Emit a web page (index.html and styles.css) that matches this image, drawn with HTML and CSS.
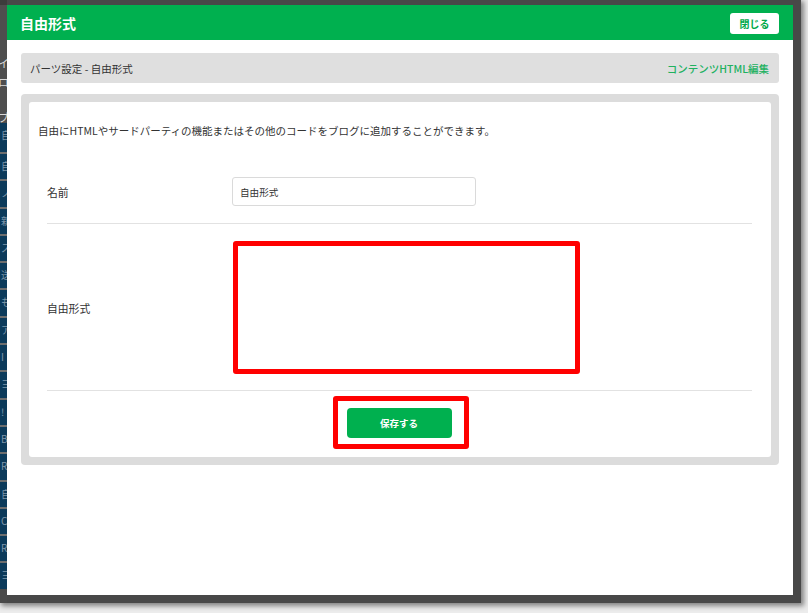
FILE: index.html
```html
<!DOCTYPE html>
<html lang="ja">
<head>
<meta charset="utf-8">
<title>自由形式</title>
<link rel="stylesheet" href="styles.css">
</head>
<body>
<div class="screen">
  <div class="under">
    <div class="under-top">
      <span class="u1">イ</span>
      <span class="u2">ロ</span>
      <span class="u3">プ</span>
    </div>
    <ul class="under-nav">
      <li>自</li><li>自</li><li>ノ</li><li>新</li><li>ス</li><li>送</li><li>も</li><li>ア</li>
      <li>I</li><li>ヨ</li><li>!</li><li>B</li><li>R</li><li>自</li><li>C</li><li>R</li><li>ヨ</li>
    </ul>
    <div class="under-bottom"></div>
  </div>
  <div class="modal">
    <header class="modal-head">
      <h1 class="modal-title">自由形式</h1>
      <button class="close-btn" type="button">閉じる</button>
    </header>
    <div class="modal-body">
      <div class="crumb">
        <span class="crumb-text">パーツ設定 - 自由形式</span>
        <a class="crumb-link" href="#">コンテンツHTML編集</a>
      </div>
      <div class="panel">
        <div class="card">
          <p class="desc">自由にHTMLやサードパーティの機能またはその他のコードをブログに追加することができます。</p>
          <div class="rows">
            <div class="row row-name">
              <div class="label">名前</div>
              <div class="field"><input class="text-input" type="text" value="自由形式"></div>
            </div>
            <div class="row row-code">
              <div class="label">自由形式</div>
              <div class="field"><div class="code-box"></div></div>
            </div>
            <div class="actions">
              <div class="mark">
                <button class="save-btn" type="button">保存する</button>
              </div>
            </div>
          </div>
        </div>
      </div>
    </div>
  </div>
  <div class="right-gap"></div>
</div>
</body>
</html>
```

FILE: styles.css
```css
* { box-sizing: border-box; }

html, body {
  margin: 0;
  padding: 0;
}

body {
  width: 808px;
  height: 613px;
  overflow: hidden;
  background: #ececec;
  font-family: "Noto Sans CJK JP", "Noto Sans", "Liberation Sans", sans-serif;
  color: #333;
}

.screen {
  width: 801px;
  height: 603px;
  background: #484848;
  display: flex;
  align-items: flex-start;
  box-shadow: 2px 2px 5px 1px rgba(0, 0, 0, 0.45);
}

/* underlying page, visible on the left */
.under {
  width: 7px;
  height: 603px;
  overflow: hidden;
  display: flex;
  flex-direction: column;
  flex: none;
}

.under-top {
  height: 124px;
  background: #4e4e4e;
  border-top: 5px solid #3c3c3c;
  display: flex;
  flex-direction: column;
  font-size: 11px;
  line-height: 12px;
  color: #d8d8d8;
}

.under-top span { display: block; margin-left: -2px; }
.u1 { margin-top: 52px; }
.u2 { margin-top: 7px; }
.u3 { margin-top: 23px; }

.under-nav {
  list-style: none;
  margin: 0;
  padding: 0;
  flex: 1;
  background: #0c3a5a;
}

.under-nav li {
  height: 27.3px;
  border-top: 2px solid #6d6d6d;
  font-size: 10px;
  line-height: 24px;
  color: #7f97aa;
  padding-left: 1px;
  overflow: hidden;
}

.under-nav li:first-child { border-top: 0; height: 29px; }

.under-bottom {
  height: 16px;
  background: #4a4a4a;
  flex: none;
}

/* modal */
.modal {
  width: 786px;
  height: 590px;
  margin-top: 5px;
  background: #fff;
  flex: none;
  display: flex;
  flex-direction: column;
}

.right-gap {
  flex: 1;
}

.modal-head {
  height: 35px;
  background: #00b04f;
  display: flex;
  align-items: center;
  justify-content: space-between;
  padding: 0 14px 0 13px;
}

.modal-title {
  margin: 0;
  font-size: 14px;
  font-weight: 700;
  color: #fff;
  line-height: 20px;
}

.close-btn {
  width: 49px;
  height: 21px;
  border: 0;
  border-radius: 3px;
  background: #fff;
  color: #00a94a;
  font-family: inherit;
  font-size: 10px;
  font-weight: 700;
  padding: 0;
  margin-top: 1px;
}

.modal-body {
  padding: 13px 14px;
  display: flex;
  flex-direction: column;
  gap: 11px;
}

.crumb {
  height: 30px;
  background: #dfdfdf;
  border-radius: 3px;
  display: flex;
  align-items: center;
  justify-content: space-between;
  padding: 0 10px 0 9px;
}

.crumb-text {
  font-size: 10.5px;
  color: #333;
}

.crumb-link {
  font-size: 10.5px;
  color: #21b15f;
  text-decoration: none;
  font-weight: 500;
}

.panel {
  height: 371px;
  background: #dcdcdc;
  border-radius: 4px;
  padding: 8px;
}

.card {
  height: 100%;
  background: #fff;
  border-radius: 3px;
  padding-top: 21px;
}

.desc {
  margin: 0 0 0 9px;
  font-size: 10.5px;
  line-height: 16px;
  color: #333;
}

.rows {
  margin: 20px 19px 0 18px;
}

.row {
  display: flex;
  align-items: center;
  border-bottom: 1px solid #e2e2e2;
}

.row-name { padding: 18px 0 17px; }
.row-code { padding: 17px 0 16px; }

.label {
  width: 185px;
  flex: none;
  font-size: 10.8px;
  color: #333;
}

.field { flex: 1; display: flex; }

.text-input {
  width: 244px;
  height: 29px;
  border: 1px solid #dadada;
  border-radius: 3px;
  padding: 0 7px;
  font-family: inherit;
  font-size: 9.6px;
  color: #333;
  background: #fff;
  outline: none;
}

.code-box {
  width: 347px;
  height: 133px;
  margin-left: 1px;
  border: 5px solid #ff0000;
  border-radius: 3px;
  background: #fff;
}

.actions {
  display: flex;
  justify-content: center;
  padding: 5px 0 0;
}

.mark {
  width: 136px;
  height: 53px;
  border: 5px solid #ff0000;
  border-radius: 3px;
  padding: 7px 12px 6px 9px;
  margin-left: 2px;
}

.save-btn {
  width: 105px;
  height: 30px;
  border: 0;
  border-radius: 4px;
  background: #00b04f;
  color: #fff;
  font-family: inherit;
  font-size: 9.5px;
  font-weight: 700;
  padding: 0;
}
```
